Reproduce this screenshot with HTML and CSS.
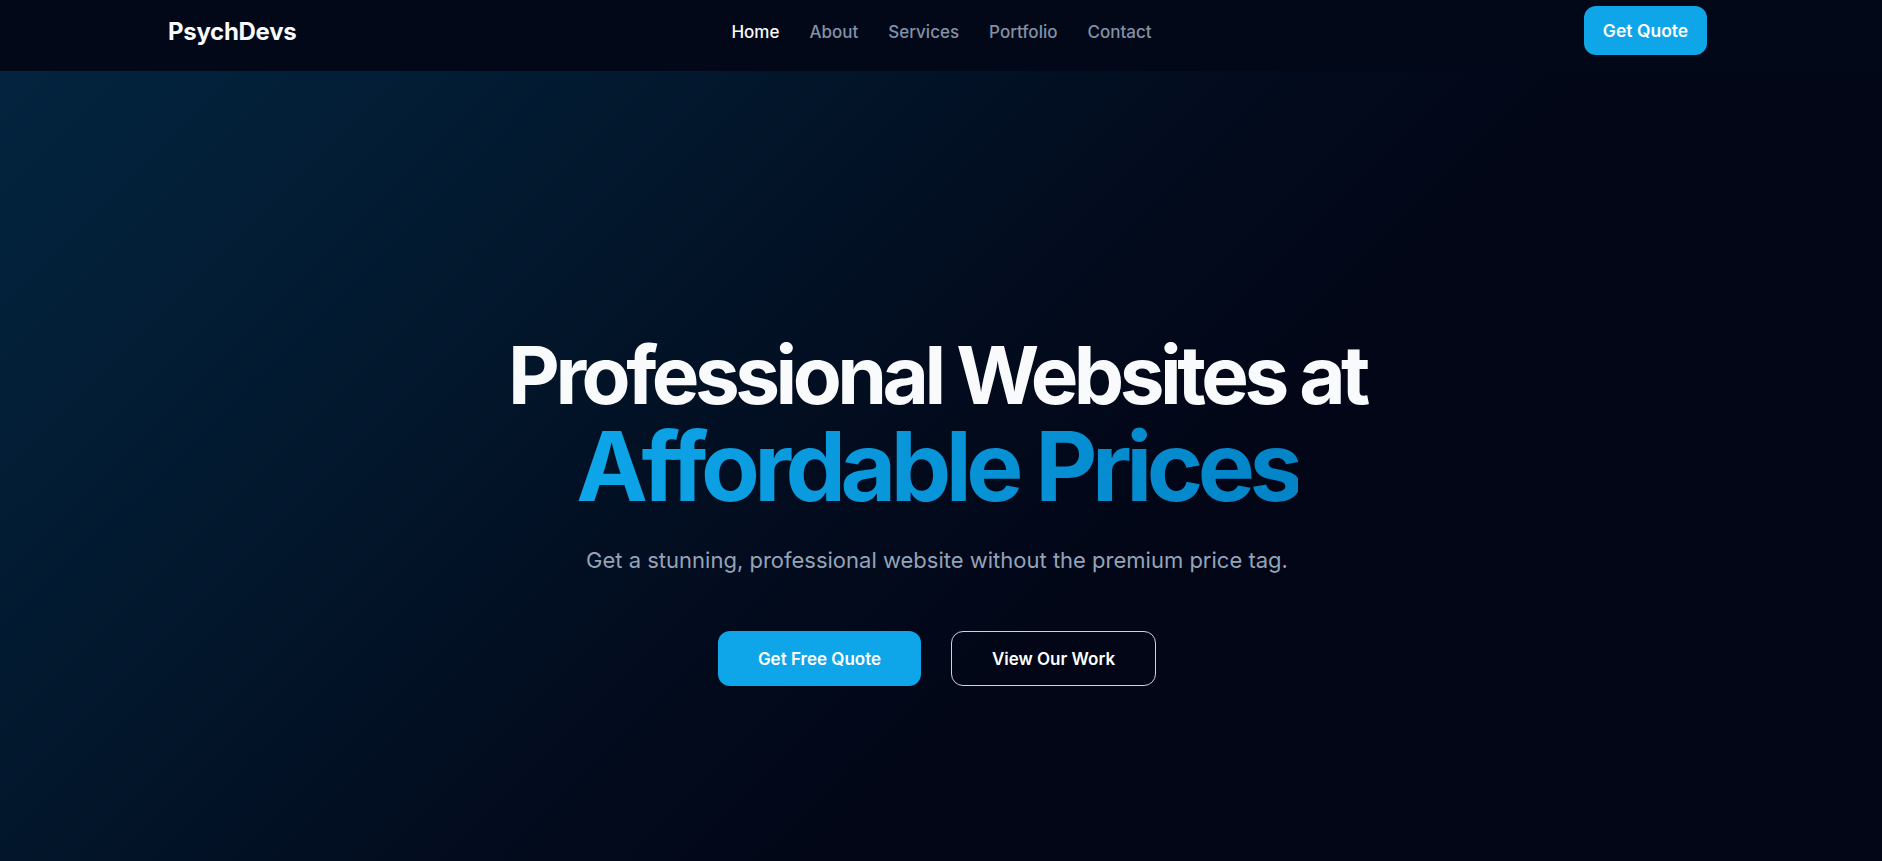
FILE: index.html
```html
<!DOCTYPE html>
<html lang="en">
<head>
<meta charset="utf-8">
<title>PsychDevs</title>
<link rel="stylesheet" href="styles.css">
</head>
<body>
<header class="site-header">
  <div class="header-inner">
    <a class="logo" href="#">PsychDevs</a>
    <nav class="main-nav">
      <a class="nav-link active" href="#">Home</a>
      <a class="nav-link" href="#">About</a>
      <a class="nav-link" href="#">Services</a>
      <a class="nav-link" href="#">Portfolio</a>
      <a class="nav-link" href="#">Contact</a>
    </nav>
    <div class="header-cta">
      <a class="btn btn-small" href="#">Get Quote</a>
    </div>
  </div>
</header>
<main>
  <section class="hero">
    <div class="hero-content">
      <h1 class="hero-title">
        <span class="title-line">Professional Websites at</span>
        <span class="title-line accent">Affordable Prices</span>
      </h1>
      <p class="hero-sub">Get a stunning, professional website without the premium price tag.</p>
      <div class="hero-actions">
        <a class="btn btn-primary" href="#">Get Free Quote</a>
        <a class="btn btn-outline" href="#">View Our Work</a>
      </div>
    </div>
  </section>
</main>
</body>
</html>
```

FILE: styles.css
```css
* { box-sizing: border-box; }
html, body { margin: 0; padding: 0; }
body {
  background: #020617;
  color: #f8fafc;
  font-family: Inter, "Noto Sans", "Liberation Sans", sans-serif;
  overflow: hidden;
}
a { text-decoration: none; color: inherit; }

.site-header {
  height: 72px;
  background: #020817;
  border-bottom: 1px solid #1a2335;
}
.header-inner {
  height: 71px;
  padding: 7px 175px 15px 168px;
  display: grid;
  grid-template-columns: 1fr auto 1fr;
  align-items: center;
}
.logo {
  font-size: 24px;
  font-weight: 700;
  letter-spacing: -0.3px;
  color: #f8fafc;
}
.main-nav {
  display: flex;
  gap: 30px;
  margin-left: 8px;
}
.nav-link {
  font-size: 17px;
  font-weight: 500;
  color: #8391a7;
}
.nav-link.active { color: #f8fafc; }
.header-cta {
  display: flex;
  justify-content: flex-end;
  margin-top: -2px;
}

.btn {
  display: inline-flex;
  align-items: center;
  justify-content: center;
  font-weight: 600;
  border-radius: 12px;
}
.btn-small {
  height: 49px;
  width: 123px;
  background: #0ea5e9;
  color: #ffffff;
  font-size: 17.5px;
}

.hero {
  height: 861px;
  margin-top: -1px;
  padding: 18px 8px 0 0;
  background: linear-gradient(135deg, #03243f 0%, #021a30 22%, #020c1e 45%, #020617 60%, #020617 100%);
  display: flex;
  align-items: center;
  justify-content: center;
}
.hero-content {
  display: flex;
  flex-direction: column;
  align-items: center;
  text-align: center;
}
.hero-title {
  margin: 0;
  font-weight: 700;
  color: #f8fafc;
  display: flex;
  flex-direction: column;
  align-items: center;
  gap: 3px;
}
.title-line {
  display: block;
  font-size: 80px;
  line-height: 80px;
  letter-spacing: -4.5px;
}
.title-line.accent {
  font-size: 96px;
  line-height: 96px;
  letter-spacing: -5.5px;
  background: linear-gradient(90deg, #0ea5e9, #0284c7);
  -webkit-background-clip: text;
  background-clip: text;
  color: transparent;
}
.hero-sub {
  margin: 32px 0 0;
  font-size: 22px;
  line-height: 28px;
  color: #94a3b8;
}
.hero-actions {
  margin-top: 57px;
  display: flex;
  gap: 30px;
}
.btn-primary {
  width: 203px;
  height: 55px;
  background: #0ea5e9;
  color: #ffffff;
  font-size: 17px;
}
.btn-outline {
  width: 205px;
  height: 55px;
  border: 1px solid #cbd5e1;
  color: #ffffff;
  font-size: 17px;
}
```
